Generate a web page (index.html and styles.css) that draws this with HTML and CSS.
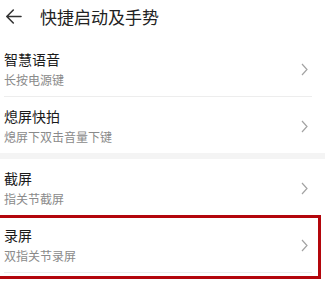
FILE: index.html
```html
<!DOCTYPE html>
<html lang="zh-CN">
<head>
    <meta charset="UTF-8">
    <meta name="viewport" content="width=device-width, initial-scale=1.0">
    <title>快捷启动及手势</title>
    <link rel="stylesheet" href="styles.css">
</head>
<body>
    <div class="header">
        <svg class="back" width="17" height="17" viewBox="0 0 17 17">
            <path d="M16 8.5H1.8M8.3 2L1.8 8.5L8.3 15" fill="none" stroke="#333" stroke-width="1.6" stroke-linecap="round" stroke-linejoin="round"/>
        </svg>
        <div class="title">快捷启动及手势</div>
    </div>

    <div class="group">
        <div class="row">
            <div class="text">
                <div class="name">智慧语音</div>
                <div class="desc">长按电源键</div>
            </div>
            <svg class="chev" width="7" height="13" viewBox="0 0 7 13"><path d="M1 1L6 6.5L1 12" fill="none" stroke="#a3a3a3" stroke-width="1.2"/></svg>
        </div>
        <div class="row last">
            <div class="text">
                <div class="name">熄屏快拍</div>
                <div class="desc">熄屏下双击音量下键</div>
            </div>
            <svg class="chev" width="7" height="13" viewBox="0 0 7 13"><path d="M1 1L6 6.5L1 12" fill="none" stroke="#a3a3a3" stroke-width="1.2"/></svg>
        </div>
    </div>

    <div class="gap"></div>

    <div class="group">
        <div class="row">
            <div class="text">
                <div class="name">截屏</div>
                <div class="desc">指关节截屏</div>
            </div>
            <svg class="chev" width="7" height="13" viewBox="0 0 7 13"><path d="M1 1L6 6.5L1 12" fill="none" stroke="#a3a3a3" stroke-width="1.2"/></svg>
        </div>
        <div class="row marked">
            <div class="text">
                <div class="name">录屏</div>
                <div class="desc">双指关节录屏</div>
            </div>
            <svg class="chev" width="7" height="13" viewBox="0 0 7 13"><path d="M1 1L6 6.5L1 12" fill="none" stroke="#a3a3a3" stroke-width="1.2"/></svg>
        </div>
        <div class="row">
            <div class="text">
                <div class="name">亮屏</div>
                <div class="desc">抬手亮屏</div>
            </div>
            <svg class="chev" width="7" height="13" viewBox="0 0 7 13"><path d="M1 1L6 6.5L1 12" fill="none" stroke="#a3a3a3" stroke-width="1.2"/></svg>
        </div>
    </div>
</body>
</html>
```

FILE: styles.css
```css
body {
    margin: 0;
    background-color: #fff;
    font-family: "Noto Sans CJK SC", "Noto Sans", sans-serif;
    color: #1f1f1f;
    overflow: hidden;
}
.header {
    display: flex;
    align-items: center;
    height: 33px;
}
.back {
    margin-left: 5px;
    margin-right: 18px;
}
.title {
    font-size: 17px;
    line-height: 24px;
    color: #222;
}
.group {
    padding-top: 7px;
}
.gap + .group {
    padding-top: 0;
}
.row {
    position: relative;
    display: flex;
    align-items: center;
    justify-content: space-between;
    margin: 0 13px 0 4px;
    padding: 9px 0 6px 0;
    border-bottom: 1px solid #ededed;
}
.row.last {
    border-bottom: none;
}
.name {
    font-size: 14px;
    line-height: 21px;
    color: #1a1a1a;
}
.desc {
    font-size: 12px;
    line-height: 20px;
    color: #8a8a8a;
}
.chev {
    margin-right: 4px;
}
.gap {
    height: 6px;
    background-color: #f4f4f4;
}
/* red annotation frame */
.marked::after {
    content: "";
    position: absolute;
    top: -1px;
    left: -10px;
    right: -9px;
    bottom: -7px;
    border: 3px solid #b3060c;
}
```
